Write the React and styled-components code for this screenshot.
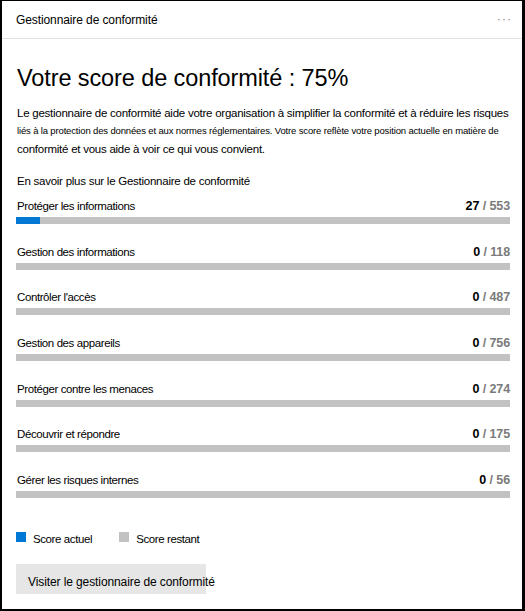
import React from "react";
import styled, { createGlobalStyle } from "styled-components";

const Global = createGlobalStyle`
  html, body { margin: 0; padding: 0; background: #000; }
  body { font-family: "Liberation Sans", Arial, sans-serif; color: #000; }
  * { box-sizing: border-box; }
`;

const Frame = styled.div`
  width: 525px;
  height: 611px;
  border-style: solid;
  border-color: #000;
  border-width: 1px 3px 2px 2px;
  background: #fff;
  display: flex;
  flex-direction: column;
  overflow: hidden;
`;

const Header = styled.div`
  flex-shrink: 0;
  height: 38px;
  border-bottom: 1px solid #e1e1e1;
  display: flex;
  align-items: center;
  justify-content: space-between;
  padding: 0 10px 0 14px;
  font-size: 12px;
  letter-spacing: -0.1px;
`;

const More = styled.span`
  color: #8a8a8a;
  font-size: 12px;
  letter-spacing: 1px;
  margin-top: -2px;
`;

const Body = styled.div`
  padding: 0 12px 0 14px;
  display: flex;
  flex-direction: column;
`;

const Title = styled.h1`
  margin: 24px 0 0 1px;
  font-size: 23.5px;
  font-weight: 400;
  line-height: 30px;
  letter-spacing: -0.1px;
`;

const Para = styled.div`
  margin: 11px 0 0 1px;
  display: flex;
  flex-direction: column;
`;

const Line = styled.span`
  display: block;
  white-space: nowrap;
  line-height: 18px;
  font-size: ${(p) => (p.$small ? "9.5px" : "11.5px")};
  letter-spacing: ${(p) => (p.$small ? "-0.15px" : "-0.25px")};
`;

const Learn = styled.div`
  margin: 15px 0 0 1px;
  font-size: 11.5px;
  letter-spacing: -0.25px;
  line-height: 16px;
`;

const List = styled.div`
  display: flex;
  flex-direction: column;
  gap: 19.67px;
  margin-top: 9px;
`;

const Row = styled.div`
  display: flex;
  flex-direction: column;
  gap: 3px;
`;

const RowHead = styled.div`
  display: flex;
  justify-content: space-between;
  align-items: baseline;
  font-size: 11.5px;
  line-height: 16px;
  letter-spacing: -0.4px;
  padding-left: 1px;
`;

const Score = styled.span`
  font-weight: 700;
  font-size: 12.5px;
  letter-spacing: -0.1px;
  color: #000;
`;

const Total = styled.span`
  color: #7a7a7a;
`;

const Track = styled.div`
  height: 7px;
  background: #c2c2c2;
  display: flex;
`;

const Fill = styled.div`
  height: 100%;
  background: #0078d4;
`;

const Legend = styled.div`
  display: flex;
  align-items: center;
  gap: 27px;
  margin-top: 34px;
  font-size: 11.5px;
  letter-spacing: -0.4px;
  line-height: 14px;
`;

const LegendItem = styled.div`
  display: flex;
  align-items: center;
  gap: 7px;
`;

const Swatch = styled.span`
  width: 10px;
  height: 10px;
  background: ${(p) => p.$color};
  display: inline-block;
  margin-top: -4px;
`;

const Button = styled.div`
  margin-top: 18px;
  width: 190px;
  height: 30px;
  background: #e6e6e6;
  display: flex;
  align-items: center;
  padding: 6px 0 0 12px;
  white-space: nowrap;
  overflow: visible;
  font-size: 12px;
  letter-spacing: -0.1px;
`;

const rows = [
  ["Protéger les informations", 27, 553],
  ["Gestion des informations", 0, 118],
  ["Contrôler l'accès", 0, 487],
  ["Gestion des appareils", 0, 756],
  ["Protéger contre les menaces", 0, 274],
  ["Découvrir et répondre", 0, 175],
  ["Gérer les risques internes", 0, 56],
];

export default function App() {
  return (
    <>
      <Global />
      <Frame>
        <Header>
          <span>Gestionnaire de conformité</span>
          <More>···</More>
        </Header>
        <Body>
          <Title>Votre score de conformité : 75%</Title>
          <Para>
            <Line>
              Le gestionnaire de conformité aide votre organisation à simplifier la conformité et à réduire les risques
            </Line>
            <Line $small>
              liés à la protection des données et aux normes réglementaires. Votre score reflète votre position actuelle en matière de
            </Line>
            <Line>conformité et vous aide à voir ce qui vous convient.</Line>
          </Para>
          <Learn>En savoir plus sur le Gestionnaire de conformité</Learn>
          <List>
            {rows.map(([label, cur, total]) => (
              <Row key={label}>
                <RowHead>
                  <span>{label}</span>
                  <Score>
                    {cur} <Total>/ {total}</Total>
                  </Score>
                </RowHead>
                <Track>
                  {cur > 0 && <Fill style={{ width: `${Math.max((cur / total) * 100, 4.4)}%` }} />}
                </Track>
              </Row>
            ))}
          </List>
          <Legend>
            <LegendItem>
              <Swatch $color="#0078d4" />
              <span>Score actuel</span>
            </LegendItem>
            <LegendItem>
              <Swatch $color="#c2c2c2" />
              <span>Score restant</span>
            </LegendItem>
          </Legend>
          <Button>Visiter le gestionnaire de conformité</Button>
        </Body>
      </Frame>
    </>
  );
}
